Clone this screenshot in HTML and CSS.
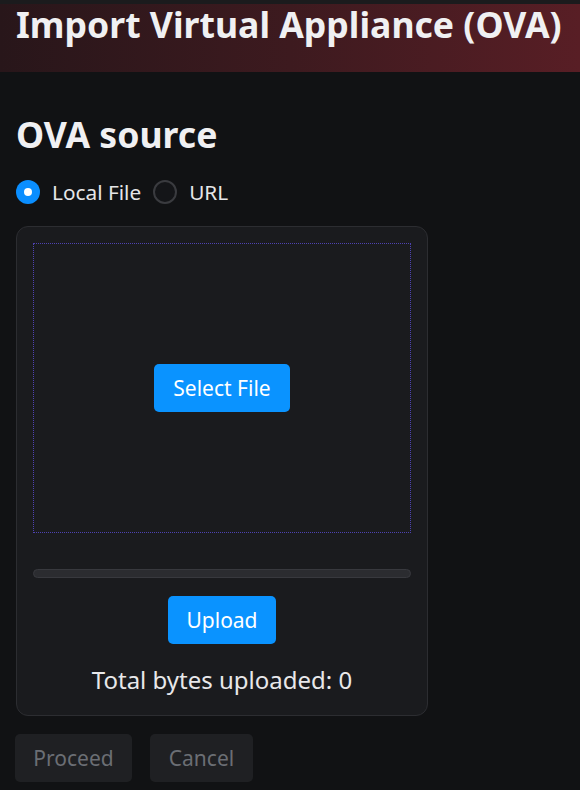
FILE: index.html
```html
<!DOCTYPE html>
<html>
<head>
<meta charset="utf-8">
<link rel="stylesheet" href="styles.css">
</head>
<body>
<div class="topstrip"></div>
<header class="header">
  <h1 class="title">Import Virtual Appliance (OVA)</h1>
</header>
<main class="content">
  <h2 class="section-title">OVA source</h2>
  <div class="radios">
    <label class="radio"><span class="radio-dot checked"></span><span>Local File</span></label>
    <label class="radio"><span class="radio-dot"></span><span>URL</span></label>
  </div>
  <div class="card">
    <div class="dropzone">
      <button class="btn btn-primary btn-select">Select File</button>
    </div>
    <div class="progress"></div>
    <div class="upload-row">
      <button class="btn btn-primary btn-upload">Upload</button>
    </div>
    <div class="bytes">Total bytes uploaded: 0</div>
  </div>
  <div class="actions">
    <button class="btn btn-disabled">Proceed</button>
    <button class="btn btn-disabled">Cancel</button>
  </div>
</main>
</body>
</html>
```

FILE: styles.css
```css
* { box-sizing: border-box; }
html, body { margin: 0; padding: 0; }
body {
  background: #111214;
  font-family: "Noto Sans", "Open Sans", sans-serif;
  color: #e8e8ea;
  width: 580px;
  height: 790px;
  overflow: hidden;
}
.topstrip {
  height: 4px;
  background: #1b1b1d;
}
.header {
  height: 68px;
  background: linear-gradient(90deg, #28161a 0%, #3d1a1f 50%, #581e25 100%);
  padding: 0 16px;
}
.title {
  margin: 0;
  font-size: 35.6px;
  font-weight: 700;
  line-height: 40px;
  color: #f0f0f2;
  white-space: nowrap;
}
.content {
  padding: 0 16px;
}
.section-title {
  margin: 0;
  margin-top: 38px;
  font-size: 35.6px;
  font-weight: 700;
  line-height: 48px;
  color: #f0f0f2;
}
.radios {
  display: flex;
  align-items: center;
  gap: 12px;
  margin-top: 17px;
  height: 34px;
}
.radio {
  display: flex;
  align-items: center;
  gap: 12px;
  font-size: 20.8px;
  color: #e6e6e8;
}
.radio-dot {
  width: 24px;
  height: 24px;
  border-radius: 50%;
  border: 2px solid #3a3b3f;
  background: #141518;
  position: relative;
}
.radio-dot.checked {
  border: none;
  background: #0a8eff;
}
.radio-dot.checked::after {
  content: "";
  position: absolute;
  left: 8px;
  top: 8px;
  width: 8px;
  height: 8px;
  border-radius: 50%;
  background: #ffffff;
}
.card {
  margin-top: 17px;
  width: 412px;
  height: 490px;
  border: 1px solid #2c2d31;
  border-radius: 12px;
  background: #1a1b1e;
  padding: 16px;
  display: flex;
  flex-direction: column;
}
.dropzone {
  height: 290px;
  border: 1px dotted #4d42b0;
  display: flex;
  align-items: center;
  justify-content: center;
}
.btn {
  font-family: "Noto Sans", "Open Sans", sans-serif;
  font-size: 21px;
  border: none;
  border-radius: 5px;
  height: 48px;
  padding: 0;
}
.btn-primary {
  background: #0a93ff;
  color: #ffffff;
}
.btn-select { width: 136px; }
.btn-upload { width: 108px; }
.progress {
  margin-top: 36px;
  height: 9px;
  border-radius: 5px;
  background: #2b2c30;
  border: 1px solid #38393e;
}
.upload-row {
  margin-top: 18px;
  display: flex;
  justify-content: center;
}
.bytes {
  margin-top: 18px;
  text-align: center;
  font-size: 24px;
  line-height: 36px;
  color: #e8e8ea;
}
.actions {
  margin-top: 18px;
  display: flex;
  gap: 18px;
  margin-left: -1px;
}
.btn-disabled {
  background: #1f2023;
  color: #6b6e74;
}
.btn-disabled:first-child { width: 117px; }
.btn-disabled:last-child { width: 103px; }
```
